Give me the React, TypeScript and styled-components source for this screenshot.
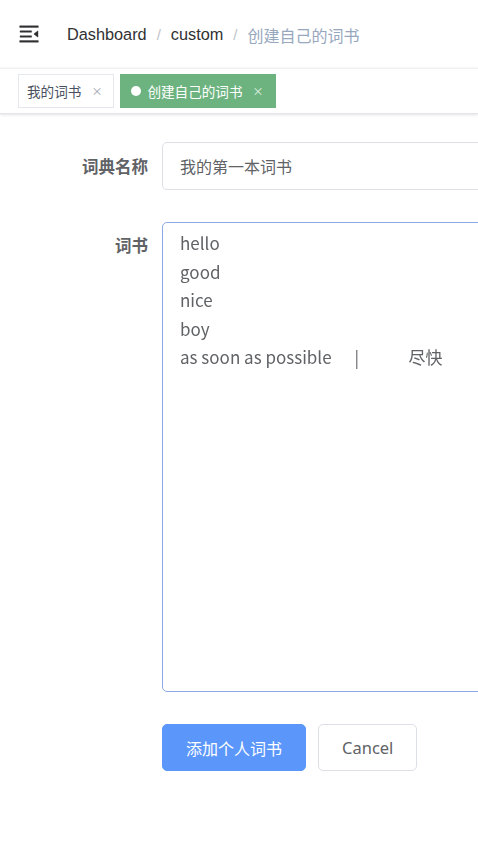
import React from "react";
import styled, { createGlobalStyle } from "styled-components";

const GlobalStyle = createGlobalStyle`
  html, body {
    margin: 0;
    padding: 0;
    background: #ffffff;
  }
  body {
    font-family: "Noto Sans", "Noto Sans CJK SC", sans-serif;
    color: #606266;
    overflow-x: hidden;
  }
  * { box-sizing: border-box; }
`;

const Page = styled.div`
  width: 478px;
  min-height: 850px;
  overflow: hidden;
  background: #ffffff;
`;

const Navbar = styled.div`
  height: 68px;
  display: flex;
  align-items: center;
  background: #ffffff;
`;

const HamburgerButton = styled.div`
  width: 24px;
  height: 24px;
  margin-left: 17px;
  margin-top: -1px;
  display: flex;
  align-items: center;
  justify-content: center;
  svg {
    width: 24px;
    height: 24px;
    transform: rotate(180deg);
    fill: #303133;
    stroke: #303133;
    stroke-width: 16;
  }
`;

const Breadcrumb = styled.nav`
  margin-left: 26px;
  display: flex;
  align-items: center;
  font-family: "Liberation Sans", "Noto Sans CJK SC", Arial, sans-serif;
  font-size: 16.5px;
  margin-top: 1px;
`;

const Crumb = styled.span<{ $current?: boolean }>`
  color: ${(p) => (p.$current ? "#97a8be" : "#303133")};
  font-family: ${(p) =>
    p.$current ? `"Noto Sans CJK SC", sans-serif` : `"Liberation Sans", Arial, sans-serif`};
  font-size: ${(p) => (p.$current ? "16px" : "16.3px")};
`;

const Separator = styled.span`
  color: #c0c4cc;
  margin: 0 10px;
  font-size: 15px;
`;

const TagsBar = styled.div`
  height: 46px;
  display: flex;
  align-items: center;
  gap: 6px;
  padding-left: 18px;
  border-top: 1px solid #eef0f3;
  border-bottom: 1px solid #e2e5eb;
  box-shadow: 0 1px 3px 0 rgba(0, 0, 0, 0.1), 0 0 3px 0 rgba(0, 0, 0, 0.04);
  background: #ffffff;
`;

const Tag = styled.div<{ $active?: boolean }>`
  height: 34px;
  display: flex;
  align-items: center;
  padding: 0 11px 0 ${(p) => (p.$active ? "10px" : "8px")};
  border: 1px solid ${(p) => (p.$active ? "#6db37f" : "#e4e7ed")};
  background: ${(p) => (p.$active ? "#6db37f" : "#ffffff")};
  color: ${(p) => (p.$active ? "#ffffff" : "#495060")};
  font-family: "Noto Sans CJK SC", sans-serif;
  font-size: 13.6px;
`;

const TagDot = styled.span`
  width: 10px;
  height: 10px;
  border-radius: 50%;
  background: #ffffff;
  margin-right: 6px;
`;

const TagClose = styled.span<{ $active?: boolean }>`
  font-size: 11px;
  margin-left: 10px;
  color: ${(p) => (p.$active ? "#e8f4eb" : "#9aa0ab")};
`;

const Main = styled.main`
  width: 600px;
  padding: 28px 24px 24px;
`;

const Form = styled.form`
  display: flex;
  flex-direction: column;
  gap: 32px;
`;

const FormItem = styled.div`
  display: flex;
  align-items: flex-start;
`;

const Label = styled.label<{ $lineHeight?: string }>`
  width: 138px;
  flex-shrink: 0;
  padding-right: 14px;
  text-align: right;
  font-family: "Noto Sans CJK SC", sans-serif;
  font-weight: 700;
  font-size: 16.5px;
  color: #606266;
  line-height: ${(p) => p.$lineHeight || "48px"};
`;

const TextInput = styled.input`
  flex: 1;
  height: 48px;
  border: 1px solid #dcdfe6;
  border-radius: 5px;
  padding: 0 17px;
  font-family: "Noto Sans CJK SC", sans-serif;
  font-size: 16px;
  color: #606266;
  outline: none;
  background: #ffffff;
`;

const TextArea = styled.textarea`
  flex: 1;
  height: 470px;
  border: 1px solid #8ea8e6;
  border-radius: 5px;
  padding: 6px 17px;
  font-family: "Noto Sans CJK SC", sans-serif;
  font-size: 17px;
  line-height: 28.5px;
  color: #606266;
  resize: none;
  outline: none;
  white-space: pre;
  overflow: hidden;
  background: #ffffff;
  will-change: transform;
`;

const Actions = styled.div`
  display: flex;
  gap: 12px;
  margin-left: 138px;
`;

const Button = styled.button<{ $primary?: boolean }>`
  height: 47px;
  padding: 0 23px;
  border-radius: 5px;
  border: 1px solid ${(p) => (p.$primary ? "#5b97fa" : "#dcdfe6")};
  background: ${(p) => (p.$primary ? "#5b97fa" : "#ffffff")};
  color: ${(p) => (p.$primary ? "#ffffff" : "#606266")};
  font-family: "Noto Sans", "Noto Sans CJK SC", sans-serif;
  font-size: ${(p) => (p.$primary ? "16px" : "16.5px")};
  cursor: pointer;
`;

const words = [
  "hello",
  "good",
  "nice",
  "boy",
  "as soon as possible      |             尽快",
].join("\n");

function HamburgerIcon() {
  return (
    <svg viewBox="0 0 1024 1024" aria-hidden="true">
      <path d="M408 442h480c4.4 0 8-3.6 8-8v-56c0-4.4-3.6-8-8-8H408c-4.4 0-8 3.6-8 8v56c0 4.4 3.6 8 8 8zm-8 204c0 4.4 3.6 8 8 8h480c4.4 0 8-3.6 8-8v-56c0-4.4-3.6-8-8-8H408c-4.4 0-8 3.6-8 8v56zm504-486H120c-4.4 0-8 3.6-8 8v56c0 4.4 3.6 8 8 8h784c4.4 0 8-3.6 8-8v-56c0-4.4-3.6-8-8-8zm0 632H120c-4.4 0-8 3.6-8 8v56c0 4.4 3.6 8 8 8h784c4.4 0 8-3.6 8-8v-56c0-4.4-3.6-8-8-8zM142.4 642.1L298.7 519a8.84 8.84 0 0 0 0-13.9L142.4 381.9c-5.8-4.6-14.4-.5-14.4 6.9v246.3a8.8 8.8 0 0 0 14.4 7z" />
    </svg>
  );
}

export default function App() {
  return (
    <Page>
      <GlobalStyle />
      <Navbar>
        <HamburgerButton>
          <HamburgerIcon />
        </HamburgerButton>
        <Breadcrumb>
          <Crumb>Dashboard</Crumb>
          <Separator>/</Separator>
          <Crumb>custom</Crumb>
          <Separator>/</Separator>
          <Crumb $current>创建自己的词书</Crumb>
        </Breadcrumb>
      </Navbar>
      <TagsBar>
        <Tag>
          我的词书
          <TagClose>×</TagClose>
        </Tag>
        <Tag $active>
          <TagDot />
          创建自己的词书
          <TagClose $active>×</TagClose>
        </Tag>
      </TagsBar>
      <Main>
        <Form onSubmit={(e) => e.preventDefault()}>
          <FormItem>
            <Label>词典名称</Label>
            <TextInput defaultValue="我的第一本词书" />
          </FormItem>
          <FormItem>
            <Label $lineHeight="46px">词书</Label>
            <TextArea defaultValue={words} spellCheck={false} />
          </FormItem>
          <Actions>
            <Button type="submit" $primary>
              添加个人词书
            </Button>
            <Button type="button">Cancel</Button>
          </Actions>
        </Form>
      </Main>
    </Page>
  );
}
